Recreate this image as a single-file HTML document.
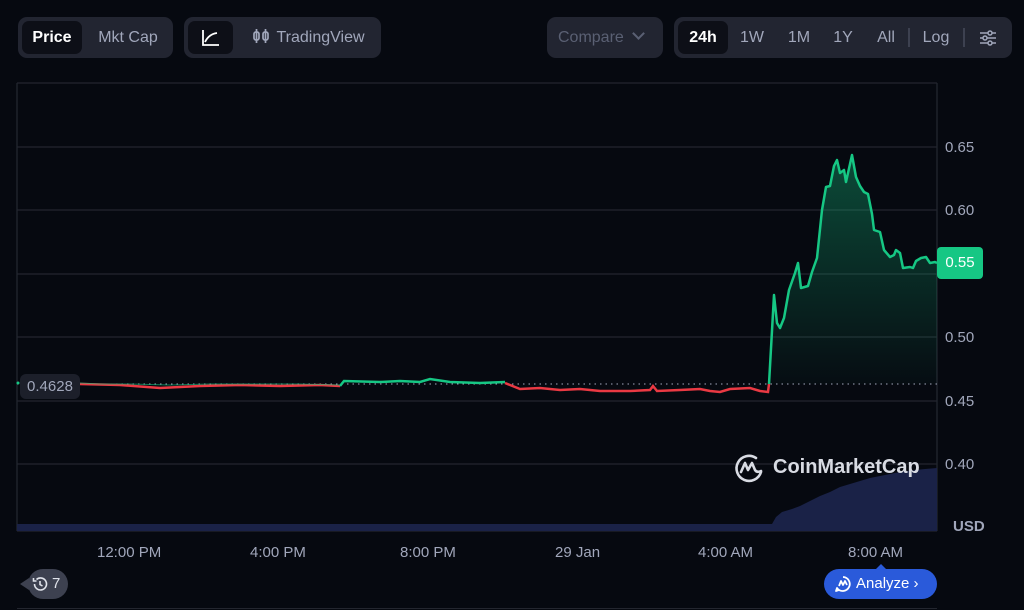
<!DOCTYPE html>
<html><head><meta charset="utf-8"><style>
body{margin:0;width:1024px;height:610px;background:#060910;font-family:"Liberation Sans",sans-serif;overflow:hidden;position:relative;color:#a1a7bb}
.grp{position:absolute;top:17px;height:41px;background:#222531;border-radius:9px;box-sizing:border-box}
.b{position:absolute;top:4px;height:33px;line-height:33px;font-size:16px;color:#a1a7bb;text-align:center}
.act{background:#0d0f17;border-radius:7px;color:#fff;font-weight:bold}
.ax{position:absolute;font-size:15px;color:#a1a7bb}
</style></head><body>
<div class="grp" style="left:18px;width:155px">
 <div class="b act" style="left:4px;width:60px">Price</div>
 <div class="b" style="left:68px;width:84px">Mkt Cap</div>
</div>
<div class="grp" style="left:184px;width:197px">
 <div class="b act" style="left:4px;width:45px"><svg width="20" height="20" viewBox="0 0 20 20" style="margin-top:7px"><path d="M2 2V17H18M4 14Q8 6 16 5" stroke="#fff" stroke-width="1.8" fill="none"/></svg></div>
 <div class="b" style="left:62px;width:125px"><svg width="18" height="18" viewBox="0 0 18 18" style="vertical-align:-3px;margin-right:6px"><rect x="2" y="5" width="5" height="8" rx="2" stroke="#a1a7bb" stroke-width="1.7" fill="none"/><rect x="11" y="5" width="5" height="8" rx="2" stroke="#a1a7bb" stroke-width="1.7" fill="none"/><path d="M4.5 2V16M13.5 2V16" stroke="#a1a7bb" stroke-width="1.7"/></svg>TradingView</div>
</div>
<div class="grp" style="left:547px;width:116px;color:#5a6073;font-size:16px;line-height:41px;padding-left:11px">Compare <span style="display:inline-block;width:7px;height:7px;border-right:2px solid #5a6073;border-bottom:2px solid #5a6073;transform:rotate(45deg);margin-left:6px;vertical-align:4px"></span></div>
<div class="grp" style="left:674px;width:338px">
 <div class="b act" style="left:4px;width:50px">24h</div>
 <div class="b" style="left:62px;width:32px">1W</div>
 <div class="b" style="left:108px;width:34px">1M</div>
 <div class="b" style="left:153px;width:32px">1Y</div>
 <div class="b" style="left:197px;width:30px">All</div>
 <div style="position:absolute;left:234px;top:11px;width:2px;height:19px;background:#3d4150"></div>
 <div class="b" style="left:243px;width:38px">Log</div>
 <div style="position:absolute;left:289px;top:11px;width:2px;height:19px;background:#3d4150"></div>
 <svg style="position:absolute;left:305px;top:12px" width="18" height="18" viewBox="0 0 18 18"><path d="M1 4H17M1 9H17M1 14H17" stroke="#a1a7bb" stroke-width="1.5"/><circle cx="11" cy="4" r="2" fill="#222531" stroke="#a1a7bb" stroke-width="1.5"/><circle cx="6" cy="9" r="2" fill="#222531" stroke="#a1a7bb" stroke-width="1.5"/><circle cx="11" cy="14" r="2" fill="#222531" stroke="#a1a7bb" stroke-width="1.5"/></svg>
</div>

<svg style="position:absolute;left:0;top:0" width="1024" height="610">
<defs><linearGradient id="g" x1="0" y1="0" x2="0" y2="1"><stop offset="0" stop-color="#16c784" stop-opacity="0.35"/><stop offset="1" stop-color="#16c784" stop-opacity="0.02"/></linearGradient></defs>
<g stroke="#23262f" stroke-width="1.3">
<line x1="17" y1="83" x2="937" y2="83"/><line x1="17" y1="147" x2="937" y2="147"/><line x1="17" y1="210" x2="937" y2="210"/><line x1="17" y1="274" x2="937" y2="274"/><line x1="17" y1="337" x2="937" y2="337"/><line x1="17" y1="401" x2="937" y2="401"/><line x1="17" y1="464" x2="937" y2="464"/><line x1="17" y1="531" x2="937" y2="531"/>
<line x1="17" y1="83" x2="17" y2="531"/><line x1="937" y1="83" x2="937" y2="531"/>
</g>
<path d="M17 524H772L776 517L782 512L792 509L800 506L810 501L820 496L830 492L840 487L850 484L860 481L870 478L880 476L890 474L900 472L915 470L925 469L937 468V531H17Z" fill="#1a2247"/>
<path d="M769 384L774 295L777 323L780 328L784 318L789 290L795 273L798 263L801 288L808 286L812 272L817 258L822 210L826 187L830 186L834 166L837 160L840 173L844 170L846 182L852 155L856 177L860 186L864 192L868 194L872 214L874 230L880 232L884 250L890 257L894 255L896 250L900 253L903 268L910 267L913 268L916 261L921 258L926 257L930 263L935 262L937 263V384Z" fill="url(#g)"/>
<line x1="17" y1="384" x2="937" y2="384" stroke="#a1a7bb" stroke-width="1" stroke-dasharray="1.5 4"/>
<path d="M80 384L120 385L160 388L200 386L240 385L280 386L320 385L340 386" stroke="#ea3943" stroke-width="2.5" fill="none"/>
<path d="M80 383L100 384L130 384L170 385L210 384L250 384L300 384L340 385" stroke="#16c784" stroke-width="1" fill="none" opacity="0.6"/>
<path d="M340 386L344 381L380 382L400 381L420 382L430 379L450 382L480 383L505 382" stroke="#16c784" stroke-width="2.5" fill="none"/>
<path d="M505 383L520 389L540 388L560 390L580 389L600 391L630 391L650 390L653 386L657 391L680 390L700 389L710 391L720 392L730 389L750 388L760 391L768 392L769 384" stroke="#ea3943" stroke-width="2.5" fill="none"/>
<path d="M769 384L774 295L777 323L780 328L784 318L789 290L795 273L798 263L801 288L808 286L812 272L817 258L822 210L826 187L830 186L834 166L837 160L840 173L844 170L846 182L852 155L856 177L860 186L864 192L868 194L872 214L874 230L880 232L884 250L890 257L894 255L896 250L900 253L903 268L910 267L913 268L916 261L921 258L926 257L930 263L935 262L937 263" stroke="#16c784" stroke-width="2.5" fill="none" stroke-linejoin="round"/>
<circle cx="18" cy="383" r="1.5" fill="#16c784"/>
<g transform="translate(734,453)" fill="none" stroke="#d8dbe3" stroke-width="2.6" stroke-linecap="round" stroke-linejoin="round"><path d="M27 19A12.5 12.5 0 1 1 22 5"/><path d="M7 19L11 10L14 17L18 10L21 17Q23 20 27 18"/></g>
</svg>
<div style="position:absolute;left:773px;top:456px;font-size:20px;font-weight:bold;color:#d8dbe3">CoinMarketCap</div>
<div style="position:absolute;left:20px;top:374px;width:60px;height:25px;background:#1c1f2a;border-radius:6px;color:#a1a7bb;font-size:15px;line-height:25px;text-align:center">0.4628</div>
<div class="ax" style="left:945px;top:139px">0.65</div>
<div class="ax" style="left:945px;top:202px">0.60</div>
<div class="ax" style="left:945px;top:329px">0.50</div>
<div class="ax" style="left:945px;top:393px">0.45</div>
<div class="ax" style="left:945px;top:456px">0.40</div>
<div style="position:absolute;left:937px;top:247px;width:46px;height:32px;background:#16c784;border-radius:4px;color:#fff;font-size:15px;line-height:32px;text-align:center">0.55</div>
<div class="ax" style="left:953px;top:518px;font-weight:bold">USD</div>
<div class="ax" style="left:97px;top:544px">12:00 PM</div>
<div class="ax" style="left:250px;top:544px">4:00 PM</div>
<div class="ax" style="left:400px;top:544px">8:00 PM</div>
<div class="ax" style="left:555px;top:544px">29 Jan</div>
<div class="ax" style="left:698px;top:544px">4:00 AM</div>
<div class="ax" style="left:848px;top:544px">8:00 AM</div>
<div style="position:absolute;left:28px;top:569px;width:40px;height:30px;background:#3d4150;border-radius:15px;color:#e0e3ea;font-size:15px;line-height:30px"><svg width="16" height="16" viewBox="0 0 16 16" style="position:absolute;left:4px;top:7px" fill="none" stroke="#e0e3ea" stroke-width="1.6"><path d="M2.5 8A6 6 0 1 0 4.5 3.5M1.5 2V5H4.5M8 5V8.5L10.5 10"/></svg><span style="position:absolute;left:24px">7</span></div>
<div style="position:absolute;left:20px;top:578px;width:0;height:0;border-top:6px solid transparent;border-bottom:6px solid transparent;border-right:9px solid #3d4150"></div>
<div style="position:absolute;left:876px;top:564px;width:0;height:0;border-left:5px solid transparent;border-right:5px solid transparent;border-bottom:5px solid #2a5ada"></div>
<div style="position:absolute;left:824px;top:569px;width:113px;height:30px;background:#2a5ada;border-radius:15px;color:#fff;font-size:15px;line-height:30px"><svg width="18" height="18" viewBox="0 0 18 18" style="position:absolute;left:10px;top:6px" fill="none" stroke="#fff" stroke-width="1.8" stroke-linejoin="round"><path d="M9 2A7 7 0 1 1 3 13L2 16L5 15"/><path d="M5 11L7 6L9 10L11 6L13 10"/></svg><span style="position:absolute;left:32px">Analyze ›</span></div>
<div style="position:absolute;left:17px;top:608px;width:920px;height:1px;background:#23262f"></div>
</body></html>
